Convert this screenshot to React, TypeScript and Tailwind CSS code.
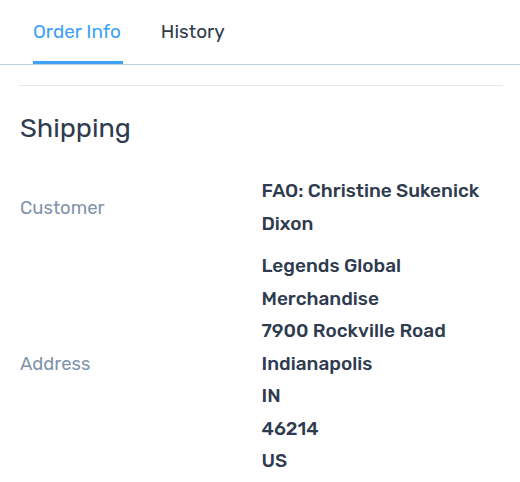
export default function App() {
  const tabs = ["Order Info", "History"];
  const address = [
    "Legends Global",
    "Merchandise",
    "7900 Rockville Road",
    "Indianapolis",
    "IN",
    "46214",
    "US",
  ];

  return (
    <div className="min-h-screen bg-white font-['Rubik','Noto_Sans',sans-serif] text-[#2f3b4f]">
      {/* Tabs */}
      <div className="flex border-b border-[#bccde0] pl-[33px]">
        {tabs.map((tab, i) => (
          <div
            key={tab}
            className={
              i === 0
                ? "mr-[38px] border-b-[3px] border-[#3fa1f6] pt-[17px] pb-[15px] pr-[2px] text-[19px] leading-[29px] text-[#3fa1f6]"
                : "pt-[17px] pb-[18px] text-[19px] leading-[29px] text-[#2f3b4f]"
            }
          >
            {tab}
          </div>
        ))}
      </div>

      <div className="pl-[19px] pr-[17px] pt-[20px]">
        <div className="border-t border-[#e6e8eb]" />

        <h2 className="pl-px pt-[25px] text-[27px] leading-[34px] text-[#2f3b4f]">Shipping</h2>

        <div className="mt-[29px] flex flex-col gap-[10px] pl-px">
          <div className="grid grid-cols-2 items-center">
            <div className="pt-[3px] text-[18.5px] text-[#8193ab]">Customer</div>
            <div className="text-[19px] font-medium leading-[33px]">
              <div>FAO: Christine Sukenick</div>
              <div>Dixon</div>
            </div>
          </div>

          <div className="grid grid-cols-2 items-center">
            <div className="pt-[2px] text-[18.5px] text-[#8193ab]">Address</div>
            <div className="text-[19px] font-medium leading-[32.5px]">
              {address.map((line) => (
                <div key={line}>{line}</div>
              ))}
            </div>
          </div>
        </div>
      </div>
    </div>
  );
}
